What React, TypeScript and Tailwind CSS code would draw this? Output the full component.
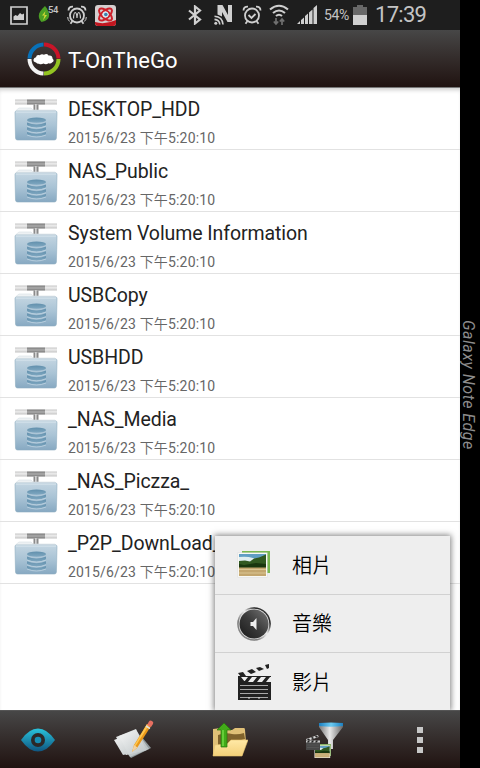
import type { ReactNode } from 'react'

const folders = [
  'DESKTOP_HDD',
  'NAS_Public',
  'System Volume Information',
  'USBCopy',
  'USBHDD',
  '_NAS_Media',
  '_NAS_Piczza_',
  '_P2P_DownLoad_',
]

function Gradients() {
  return (
    <svg className="absolute size-0" aria-hidden="true">
      <defs>
        <linearGradient id="folder" x1="0" y1="0" x2="0" y2="1">
          <stop offset="0" stopColor="#c3d5e1" />
          <stop offset="0.5" stopColor="#a9c3d5" />
          <stop offset="1" stopColor="#87a9c2" />
        </linearGradient>
        <linearGradient id="disk" x1="0" y1="0" x2="0" y2="1">
          <stop offset="0" stopColor="#6290ad" />
          <stop offset="1" stopColor="#80a8c1" />
        </linearGradient>
        <linearGradient id="pipe" x1="0" y1="0" x2="0" y2="1">
          <stop offset="0" stopColor="#b5b5b5" />
          <stop offset="0.45" stopColor="#e6e6e6" />
          <stop offset="1" stopColor="#b0b0b0" />
        </linearGradient>
        <linearGradient id="eye" x1="0" y1="0" x2="0" y2="1">
          <stop offset="0" stopColor="#29c3dc" />
          <stop offset="1" stopColor="#0f5580" />
        </linearGradient>
        <linearGradient id="paper" x1="0" y1="0" x2="1" y2="1">
          <stop offset="0" stopColor="#f7f7f7" />
          <stop offset="1" stopColor="#b8c0c2" />
        </linearGradient>
        <linearGradient id="yellow" x1="0" y1="0" x2="0" y2="1">
          <stop offset="0" stopColor="#ffe9a6" />
          <stop offset="1" stopColor="#f3cf78" />
        </linearGradient>
        <linearGradient id="funnel" x1="0" y1="0" x2="1" y2="0">
          <stop offset="0" stopColor="#777" />
          <stop offset="0.45" stopColor="#e8e8e8" />
          <stop offset="1" stopColor="#666" />
        </linearGradient>
        <linearGradient id="rim" x1="0" y1="0" x2="1" y2="0">
          <stop offset="0" stopColor="#1b7fc0" />
          <stop offset="0.5" stopColor="#6ccbf2" />
          <stop offset="1" stopColor="#1b7fc0" />
        </linearGradient>
        <linearGradient id="ring" x1="0" y1="1" x2="1" y2="0">
          <stop offset="0" stopColor="#999" />
          <stop offset="0.3" stopColor="#777" />
          <stop offset="0.55" stopColor="#eee" />
          <stop offset="0.75" stopColor="#222" />
          <stop offset="1" stopColor="#555" />
        </linearGradient>
        <linearGradient id="dial" x1="0" y1="1" x2="1" y2="0">
          <stop offset="0" stopColor="#191919" />
          <stop offset="0.5" stopColor="#3b3b3b" />
          <stop offset="1" stopColor="#777" />
        </linearGradient>
      </defs>
    </svg>
  )
}

function FolderIcon() {
  return (
    <svg viewBox="0 0 44 44" className="h-11 w-11 shrink-0">
      <rect x="1" y="0.500" width="42" height="5" fill="url(#pipe)" opacity="0.75" />
      <rect x="13" y="0.500" width="18" height="5" fill="#8c8c8c" />
      <rect x="13" y="2.500" width="18" height="1" fill="#b5b5b5" />
      <rect x="19.500" y="5.500" width="5" height="6.500" fill="#8a8a8a" />
      <rect x="21" y="5" width="1.700" height="7" fill="#d0d0d0" />
      <path d="M2 18v-6.500L5 9h12l2 2h22l1 1v6z" fill="#edf1f3" stroke="#d9e1e6" strokeWidth="0.600" />
      <path d="M1 13.500Q1 12 2.500 12h39q1.500 0 1.500 1.500L42.400 39q0 2-2 2H3.500q-2 0-2-2z" fill="url(#folder)" stroke="#8eacc0" strokeWidth="0.600" />
      <path d="M2 13h40" stroke="#dce8ef" strokeWidth="1" />
      <g fill="url(#disk)">
        <ellipse cx="22.500" cy="21.200" rx="9.500" ry="2.600" />
        <path d="M13 23.500q9.500 4 19 0v3q-9.500 4.400-19 0z" />
        <path d="M13 28.300q9.500 4 19 0v3q-9.500 4.400-19 0z" />
        <path d="M13 33q9.500 4 19 0v2.500q-9.500 4-19 0z" />
      </g>
      <path d="M13 27q9.500 4 19 0M13 31.800q9.500 4 19 0M13 36q9.500 4 19 0" fill="none" stroke="#c5d9e5" strokeWidth="0.700" />
    </svg>
  )
}

function AlarmIcon({ children }: { children: ReactNode }) {
  return (
    <svg viewBox="0 0 20 20" className="h-5 w-5" fill="none" stroke="#cfcfcf" strokeWidth="1.800">
      <circle cx="10" cy="10.500" r="7" />
      <path d="M1.500 5.500q0-4 4.500-3.800M18.500 5.500q0-4-4.500-3.800M5.500 16l-2 2.800M14.500 16l2 2.800" />
      {children}
    </svg>
  )
}

function StatusBar() {
  return (
    <div className="flex h-[30px] items-center bg-[#1e1e1e] text-[#c4c4c4]">
      <svg viewBox="0 0 18 19" className="ml-2.5 h-[19px] w-[18px] shrink-0">
        <path d="M1 1h16v17H1z" fill="none" stroke="#d0d0d0" strokeWidth="1.700" />
        <path d="M3.500 14v-3.500l2-1.500 2 1 2.500-3 2 1.500 2-1V14z" fill="#d0d0d0" />
      </svg>
      <svg viewBox="0 0 12 18" className="ml-[10px] h-[18px] w-3 shrink-0">
        <path d="M7 0c5 6 6 12 0 15L3.500 16C-1 11 0 6 7 0z" fill="#4b9e24" />
        <path d="M7.500 5L4 9.500h2.500l-1.500 5L9 9H6.500z" fill="#d1d735" />
      </svg>
      <span className="-mt-[11px] ml-[-2px] w-[10px] text-[9.500px] leading-none font-medium tracking-[-0.3px]">54</span>
      <div className="ml-[9px] shrink-0">
        <AlarmIcon>
          <path d="M6.500 13.500q.3-6 1.700-6T10 13q.4-5.500 1.800-5.500t1.700 6" strokeWidth="1.200" />
          <path d="M.7 12q0 3 2 4.500M19.300 12q0 3-2 4.500" strokeWidth="1" />
        </AlarmIcon>
      </div>
      <svg viewBox="0 0 21 21" className="ml-[8px] h-[21px] w-[21px] shrink-0">
        <rect width="21" height="21" rx="3" fill="#d5cfcf" />
        <path d="M0 17q10 3 21-2v3q0 3-3 3H3q-3 0-3-3z" fill="#c21720" />
        <g fill="none" stroke="#ce202a" strokeWidth="2">
          <ellipse cx="10.500" cy="9.500" rx="3.800" ry="8" transform="rotate(48 10.500 9.500)" />
          <ellipse cx="10.500" cy="9.500" rx="3.800" ry="8" transform="rotate(-48 10.500 9.500)" />
        </g>
        <circle cx="10.500" cy="9.500" r="3" fill="#dbe7ef" />
        <circle cx="10.800" cy="9.500" r="1.800" fill="#3a80ad" />
      </svg>
      <svg viewBox="0 0 14 20" className="ml-[72px] h-5 w-3.5 shrink-0" fill="none" stroke="#cfcfcf" strokeWidth="2.200">
        <path d="M1 5.500l11 9-5 4V1.500l5 4-11 9" />
      </svg>
      <svg viewBox="0 0 20 20" className="ml-[12px] h-5 w-5 shrink-0">
        <path d="M3.500 9.500V0h5l5.500 10V0H18v17h-4.500L8 7v4.500z" fill="#cfcfcf" />
        <g fill="none" stroke="#cfcfcf" strokeWidth="1.600">
          <path d="M.5 11.200q8 .5 8.500 8.300M.5 14.400q5 .5 5.300 5.100" />
        </g>
        <circle cx="1.800" cy="18.200" r="1.500" fill="#cfcfcf" />
      </svg>
      <div className="ml-[8px] shrink-0">
        <AlarmIcon>
          <path d="M6.500 10l3 3 4-4" />
        </AlarmIcon>
      </div>
      <svg viewBox="0 0 20 22" className="ml-[7px] h-[22px] w-5 shrink-0" fill="none" stroke="#cfcfcf" strokeWidth="2.100">
        <path d="M1 5.500q9-7.500 18 0M4 9q6-5 12 0M7 12q3-2.500 6 0" />
        <path d="M7 14v6M4.800 17.500L7 20l2.200-2.500M13 21v-6M10.800 17.500L13 15l2.200 2.500" stroke="#707070" strokeWidth="1.700" />
      </svg>
      <svg viewBox="0 0 20 20" className="ml-[8px] h-5 w-5 shrink-0" fill="#cfcfcf">
        <path d="M0 19l3-3v3zM4 15l3-2.500V19H4zM8 11l3-2.500V19H8zM12 7.500l3.500-3V19H12zM16.500 3L20 0v19h-3.500z" />
      </svg>
      <span className="ml-[7px] w-[28px] text-[14px] tracking-[-0.4px]">54%</span>
      <svg viewBox="0 0 14 20" className="ml-[1px] h-5 w-3.5 shrink-0">
        <path d="M4 0h6v2h4v18H0V2h4z" fill="#686868" />
        <path d="M0 10h14v10H0z" fill="#cfcfcf" />
      </svg>
      <span className="ml-[8px] text-[22px] leading-none tracking-[-0.7px]">17:39</span>
    </div>
  )
}

function Header() {
  return (
    <header className="flex h-[58px] items-center border-b border-[#777] bg-linear-to-b from-[#474747] to-[#201311] pl-[27px]">
      <svg viewBox="0 0 34 34" className="h-[34px] w-[34px]">
        <g fill="none" strokeWidth="4">
          <path d="M2.500 16.500A14.500 14.500 0 0 1 16.500 2.500" stroke="#0871b8" />
          <path d="M17 2.500A14.500 14.500 0 0 1 31.500 16.500" stroke="#c91428" />
          <path d="M31.500 17A14.500 14.500 0 0 1 17 31.500" stroke="#93c422" />
          <path d="M16.500 31.500A14.500 14.500 0 0 1 2.500 17" stroke="#f3f3f3" />
        </g>
        <path d="M9 20.500q-3-.7-2.500-3 .5-2 2.500-2.300.5-3 3.700-2 2-1.800 4.300-.5 3-1.500 4.500.8 4-.5 4 3 2.500 2.500-.5 4-1 1.500-3.500.7-2.500 1.800-5 .3-2.500 1.500-4.500.2-1.700.3-3-1.200z" fill="#fff" />
      </svg>
      <h1 className="mt-[3px] ml-[7px] text-[22px] tracking-[0.150px] text-white">T-OnTheGo</h1>
    </header>
  )
}

function FolderRow({ name }: { name: string }) {
  return (
    <li className="flex h-[62px] border-b border-[#e2e2e2] pl-3.5">
      <div className="pt-[11px]">
        <FolderIcon />
      </div>
      <div className="ml-2.5 whitespace-nowrap">
        <p className="mt-[9px] text-[19.500px] leading-[26px] tracking-[-0.080px] text-[#222]">{name}</p>
        <p className="mt-[5px] text-[14px] leading-[20px] tracking-[0.160px] text-[#666]">
          2015/6/23 <span className="font-[350]">下午</span>5:20:10
        </p>
      </div>
    </li>
  )
}

function Scenery() {
  return (
    <>
      <rect width="29" height="24" fill="#f8f8f4" />
      <rect x="1" y="1" width="27" height="9" fill="#5f9ec4" />
      <path d="M1 4q8-1 14 1t13 0v6H1z" fill="#dfedf0" />
      <path d="M1 8l6-.5 5 1 4-3 5-1 7-3v14H1z" fill="#315921" />
      <path d="M1 11l5 1 6-1 6-1 10 1v4H1z" fill="#19370f" />
      <path d="M1 14.500h27V23H1z" fill="#c3a66e" />
      <path d="M1 16.500h27M1 20h27" stroke="#dbc694" />
    </>
  )
}

function PhotoIcon() {
  return (
    <svg viewBox="0 0 34 30" className="h-[30px] w-[34px]">
      <path d="M5 1h28v22H5z" fill="#79b850" />
      <path d="M7 3h23v20H7z" fill="#9bcf79" />
      <g transform="translate(1 3)">
        <rect x="-.5" y="-.5" width="30" height="25" fill="#ddd" />
        <Scenery />
      </g>
    </svg>
  )
}

function MusicIcon() {
  return (
    <svg viewBox="0 0 34 36" className="h-9 w-[34px]">
      <circle cx="17" cy="18" r="16.800" fill="url(#ring)" />
      <circle cx="17" cy="18" r="15.300" fill="#e5e5e5" />
      <circle cx="17" cy="18" r="14.500" fill="url(#dial)" />
      <path d="M13.500 16h2.500l3.500-4v12L16 20h-2.500z" fill="#eee" />
    </svg>
  )
}

function ClapperIcon() {
  return (
    <svg viewBox="0 0 34 38" className="h-[38px] w-[34px]">
      <path d="M0 11L31 1l1 4L2 15z" fill="#ececec" />
      <path d="M1 10l5-1 3 4-5 1zM10 8l5-2 4 3-5 2zM19 5l4-1 4 2-5 2zM28 2l4-1v4l-2 1z" fill="#222" />
      <path d="M1 13h33v24H1z" fill="#222" />
      <path d="M1 14h33v5H1z" fill="#eee" />
      <path d="M1 14h3l4 5H1zM11 14h4l-4 5H7zM20 14h4l-4 5h-4zM29 14h4l-4 5h-4z" fill="#222" />
      <path d="M3 22.500h28M3 26.500h28M3 30.500h28M3 34.500h28" stroke="#a8a8a8" strokeWidth="1" />
      <path d="M12 34v2M22 34v2" stroke="#ddd" />
    </svg>
  )
}

function SmallClapper() {
  return (
    <svg viewBox="0 0 14 15" className="absolute top-[14px] left-0 h-[15px] w-3.5">
      <path d="M0 4L12 0l.6 2L1 6z" fill="#ddd" />
      <path d="M1 4l2-.6 1 1.400-2 .6zM5 2.600l2-.6 1 1.400-2 .6zM9 1.300l2-.6 1 1.400-2 .6z" fill="#222" />
      <path d="M0 5.500h14V15H0z" fill="#484848" />
      <path d="M0 5.500h14v2H0z" fill="#ccc" />
      <path d="M2 5.500h2l-1 2H1zM6 5.500h2l-1 2H5zM10 5.500h2l-1 2H9z" fill="#222" />
      <path d="M1 10h12M1 12.500h12" stroke="#5c5c5c" strokeWidth="0.600" />
    </svg>
  )
}

function MenuItem({ icon, label }: { icon: ReactNode; label: string }) {
  return (
    <li className="flex h-[58px] items-center border-b border-[#d1d1d1] pl-[22px] first:h-[59px] last:border-b-0">
      <div className="flex w-[34px] justify-center">{icon}</div>
      <span className="mt-px ml-[21px] text-[20px] leading-none font-[350] text-black">{label}</span>
    </li>
  )
}

function FilterMenu() {
  return (
    <ul className="absolute bottom-[58px] left-[215px] h-[174px] w-[235px] bg-[#eee] shadow-[0_0_6px_1px_rgba(0,0,0,0.5)]">
      <MenuItem icon={<PhotoIcon />} label="相片" />
      <MenuItem icon={<MusicIcon />} label="音樂" />
      <MenuItem icon={<ClapperIcon />} label="影片" />
    </ul>
  )
}

function Toolbar() {
  return (
    <footer className="relative flex h-[58px] shrink-0 items-center border-t border-[#555] bg-linear-to-b from-[#474747] to-[#201311] pt-px">
      <svg viewBox="0 0 34 24" className="ml-[21px] h-6 w-[34px]">
        <path d="M0 12Q8 .5 17 .5T34 12q-8 11.500-17 11.500T0 12z" fill="url(#eye)" />
        <circle cx="17" cy="12" r="7" fill="#2c2828" />
        <circle cx="17" cy="12" r="3.300" fill="#178db3" />
      </svg>
      <svg viewBox="0 0 40 40" className="ml-[59px] h-10 w-10">
        <path d="M4 23l23-7 10 12-20 10z" fill="#90999c" />
        <path d="M2 17l20-8 10 21-20 5z" fill="#e2e5e5" />
        <path d="M0 20l21-8 12 18-24 5z" fill="url(#paper)" />
        <path d="M5 16l17-6 13 19-19 8z" fill="url(#paper)" opacity="0.800" />
        <path d="M18 32l2-7L33 4l4 2-14 22z" fill="#e99819" />
        <path d="M20 26L33 4l2 1-14 22z" fill="#ffc750" />
        <path d="M18 32l2-7 3.500 2.500z" fill="#f2d2a0" />
        <path d="M33 5l2-3.500Q36 0 38 1t1 3l-2 3z" fill="#e66f61" />
        <path d="M32 6l4 2.500" stroke="#ddd" strokeWidth="1.500" />
      </svg>
      <svg viewBox="0 0 36 36" className="ml-[58px] h-9 w-9">
        <path d="M1 34V7l8-1 2 2h9l3-2h9q1 0 1 2l1 12-4 14z" fill="#e0c077" />
        <path d="M6 13q8-3 14-1 6 1 12-1l1 6-27 7z" fill="#80632d" />
        <path d="M1 34l2-11 12-1 4-4h17L30 34z" fill="url(#yellow)" stroke="#e7c471" strokeWidth="0.600" />
        <path d="M12 1l7 7h-4v17H9V8H5z" fill="#42aa19" stroke="#27750d" strokeWidth="0.700" />
        <path d="M10 8h2v16h-2z" fill="#65cd38" />
      </svg>
      <div className="relative ml-[58px] h-[38px] w-[39px]">
        <svg viewBox="0 0 39 38" className="h-full w-full">
          <path d="M13 4h24v2L27 19v9h-5v-9L13 6z" fill="url(#funnel)" />
          <path d="M13 2q12-1 24 0v3q-12 1.500-24 0z" fill="url(#rim)" />
          <path d="M11 23h14v12H11z" fill="#89b267" />
          <g transform="translate(8.500 24.500) scale(.54 .52)">
            <Scenery />
          </g>
        </svg>
        <SmallClapper />
      </div>
      <div className="ml-[72px] flex flex-col gap-1">
        <i className="size-1.5 bg-[#c7c7c7]" />
        <i className="size-1.5 bg-[#c7c7c7]" />
        <i className="size-1.5 bg-[#c7c7c7]" />
      </div>
    </footer>
  )
}

export default function App() {
  return (
    <div className="flex h-[768px] w-[480px] overflow-hidden bg-black font-[Roboto,'Noto_Sans_CJK_TC',sans-serif]">
      <Gradients />
      <div className="relative flex w-[460px] shrink-0 flex-col bg-white">
        <StatusBar />
        <Header />
        <main className="flex-1 shadow-[inset_0_4px_4px_-2px_rgba(0,0,0,0.2)]">
          <ul>
            {folders.map((name) => (
              <FolderRow key={name} name={name} />
            ))}
          </ul>
        </main>
        <FilterMenu />
        <Toolbar />
      </div>
      <aside className="flex w-5 items-start justify-center pt-[320px]">
        <span className="-ml-1 text-[16px] leading-5 tracking-[0.500px] whitespace-nowrap text-[#8c8c8c] italic [writing-mode:vertical-rl]">Galaxy Note Edge</span>
      </aside>
    </div>
  )
}
